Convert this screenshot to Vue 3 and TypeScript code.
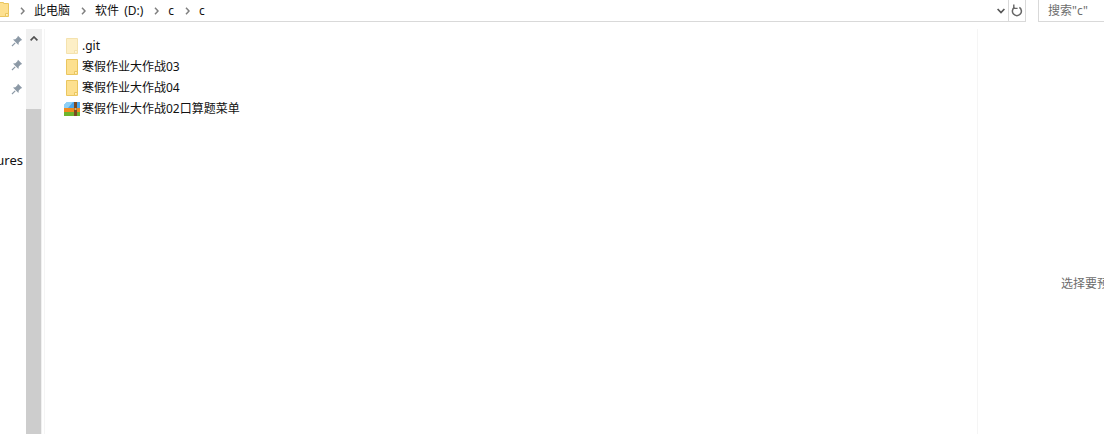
<template>
  <div class="explorer">
    <header class="topbar">
      <div class="address">
        <svg class="root-folder" width="9" height="22" viewBox="0 0 9 22">
          <path d="M-6 2.5H3.5V3.5H8.5V16.5H-6Z" fill="#fde08f" stroke="#eac65f" />
          <path d="M5.5 16.5V13.5H8.5" fill="#fdf0c4" stroke="#eac65f" />
        </svg>
        <nav class="crumbs">
          <template v-for="crumb in crumbs" :key="crumb">
            <svg class="chevron" width="5" height="8" viewBox="0 0 5 8">
              <path d="M1 .8 4 4 1 7.2" fill="none" stroke="#808080" stroke-width="1.5" />
            </svg>
            <span class="crumb">{{ crumb }}</span>
          </template>
        </nav>
        <svg class="dropdown" width="8" height="6" viewBox="0 0 8 6">
          <path d="M.6 1 4 4.6 7.4 1" fill="none" stroke="#555" stroke-width="1.7" />
        </svg>
        <div class="refresh">
          <svg width="12" height="14" viewBox="0 0 12 14">
            <path d="M3.4 3.4A4.5 4.5 0 1 0 8.4 3.4" fill="none" stroke="#666" stroke-width="1.5" />
            <path d="M2.8 .6V4.4H6.6" fill="none" stroke="#666" stroke-width="1.4" />
          </svg>
        </div>
      </div>
      <div class="search">搜索"c"</div>
    </header>

    <main class="body">
      <aside class="quick">
        <svg v-for="n in 3" :key="n" class="pin" width="12" height="12" viewBox="0 0 12 12">
          <path d="M7 .8 11.2 5 9.8 5.6 7.8 7.6 7.4 10 2 4.6 4.4 4.2 6.4 2.2Z" fill="#8c99a6" />
          <path d="M4.2 7.8 1 11" stroke="#8c99a6" stroke-width="1.2" />
        </svg>
        <span class="cut-label">ures</span>
      </aside>

      <div class="scrollbar">
        <div class="track">
          <svg width="8" height="5" viewBox="0 0 8 5">
            <path d="M.6 4.4 4 1 7.4 4.4" fill="none" stroke="#505050" stroke-width="1.7" />
          </svg>
        </div>
        <div class="thumb"></div>
      </div>

      <section class="files">
        <div v-for="file in files" :key="file.name" class="file">
          <svg v-if="file.kind === 'archive'" class="icon" width="16" height="16" viewBox="0 0 16 16">
            <path d="M0 4 3 1H16V7H0Z" fill="#4ba6ea" />
            <path d="M3 1 9 1 4 7H0V4Z" fill="#8fd0f5" />
            <rect y="7" width="16" height="4" fill="#f08a1d" />
            <rect y="11" width="16" height="4" fill="#6fb52c" />
            <rect x="10" y="1" width="3" height="14" fill="#7a4a22" />
            <rect x="10.5" y="7" width="2" height="2" fill="#d9b36c" />
          </svg>
          <svg v-else class="icon" :class="{ hidden: file.kind === 'hidden' }" width="16" height="16" viewBox="0 0 16 16">
            <path d="M2.5 .5H13.5V15.5H2.5Z" fill="#fde08f" stroke="#eac65f" />
            <path d="M10.5 15.5V12.5H13.5" fill="#fdf0c4" stroke="#eac65f" />
          </svg>
          <span class="name">{{ file.name }}</span>
        </div>
      </section>

      <aside class="preview">
        <span class="hint">选择要预览的文件。</span>
      </aside>
    </main>
  </div>
</template>

<script setup lang="ts">
interface FileRow {
  name: string
  kind: 'folder' | 'hidden' | 'archive'
}

const crumbs = ['此电脑', '软件 (D:)', 'c', 'c']

const files: FileRow[] = [
  { name: '.git', kind: 'hidden' },
  { name: '寒假作业大作战03', kind: 'folder' },
  { name: '寒假作业大作战04', kind: 'folder' },
  { name: '寒假作业大作战02口算题菜单', kind: 'archive' },
]
</script>

<style>
html,
body {
  margin: 0;
  background: #fff;
  overflow: hidden;
}
</style>

<style scoped>
.explorer {
  width: 1104px;
  height: 434px;
  display: flex;
  flex-direction: column;
  overflow: hidden;
  font-family: "Noto Sans", "Noto Sans CJK SC", "Liberation Sans", sans-serif;
  font-size: 12px;
  color: #111;
}

.topbar {
  height: 22px;
  flex: none;
  display: flex;
  gap: 12px;
  background: #fff;
}

.address {
  width: 1026px;
  display: flex;
  align-items: center;
  border-bottom: 1px solid #d9d9d9;
  border-right: 1px solid #d9d9d9;
  box-sizing: border-box;
}

.root-folder {
  flex: none;
  align-self: flex-start;
  margin-right: 11px;
}

.crumbs {
  flex: 1;
  display: flex;
  align-items: center;
}

.chevron {
  flex: none;
  margin-right: 9px;
}

.crumb {
  margin-right: 11px;
  line-height: 20px;
  word-spacing: 2px;
}

.dropdown {
  flex: none;
  margin: 0 3px 0 0;
}

.refresh {
  width: 17px;
  height: 21px;
  flex: none;
  display: flex;
  align-items: center;
  justify-content: center;
  border-left: 1px solid #d9d9d9;
  box-sizing: border-box;
}

.search {
  flex: 1;
  box-sizing: border-box;
  padding: 2px 0 2px 9px;
  line-height: 18px;
  color: #6d6d6d;
  border-left: 1px solid #d9d9d9;
  border-bottom: 1px solid #d9d9d9;
}

.body {
  flex: 1;
  display: flex;
  min-height: 0;
}

.quick {
  width: 26px;
  flex: none;
  box-sizing: border-box;
  display: flex;
  flex-direction: column;
  align-items: flex-end;
  padding: 13px 3px 0 0;
  position: relative;
}

.pin {
  margin-bottom: 12px;
}

.cut-label {
  position: absolute;
  right: 3px;
  top: 129px;
  line-height: 18px;
  font-size: 13px;
}

.scrollbar {
  width: 16px;
  flex: none;
  margin-top: 7px;
  display: flex;
  flex-direction: column;
  background: #f0f0f0;
}

.track {
  height: 80px;
  flex: none;
  display: flex;
  justify-content: center;
  padding-top: 7px;
  box-sizing: border-box;
}

.thumb {
  flex: 1;
  width: 15px;
  background: #cdcdcd;
}

.files {
  flex: 1;
  margin: 7px 0 0 2px;
  border-left: 1px solid #f5f5f5;
  padding: 6px 0 0 19px;
}

.file {
  height: 21px;
  display: flex;
  align-items: center;
  gap: 2px;
}

.icon {
  flex: none;
}

.icon.hidden {
  opacity: 0.5;
}

.name {
  line-height: 21px;
  white-space: nowrap;
}

.preview {
  width: 127px;
  flex: none;
  margin-top: 7px;
  border-left: 1px solid #f5f5f5;
  box-sizing: border-box;
  padding: 246px 0 0 83px;
  overflow: hidden;
  white-space: nowrap;
  color: #6d6d6d;
  line-height: 18px;
}
</style>
